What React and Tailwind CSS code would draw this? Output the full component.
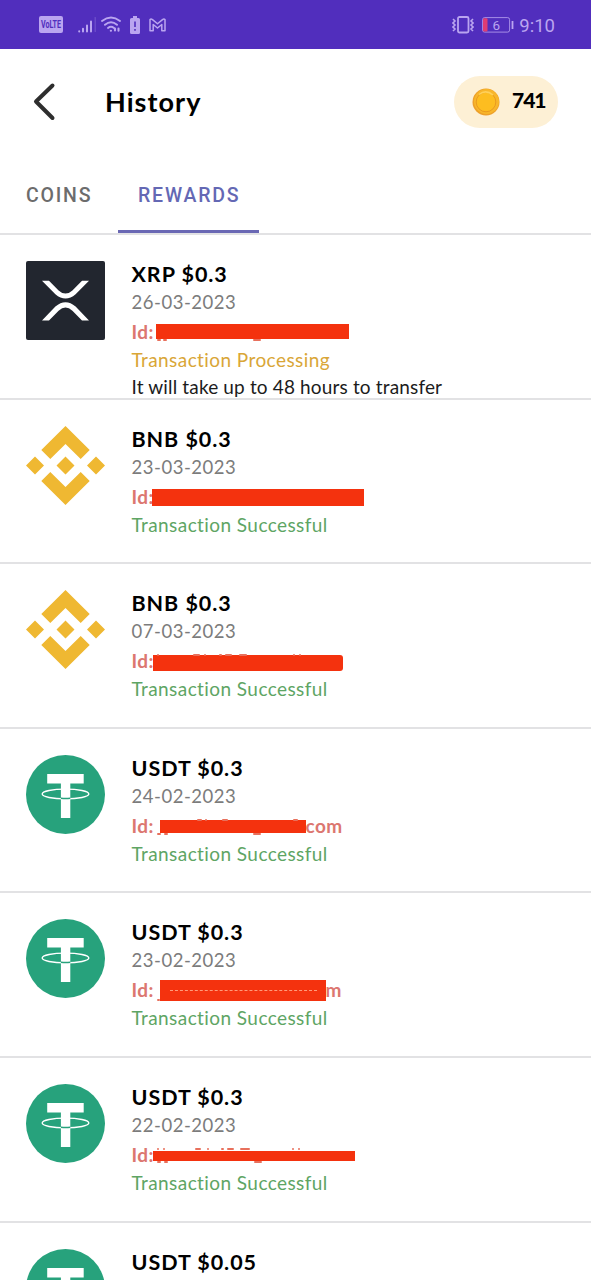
import clsx from 'clsx';

const transactions = [
    {
        coin: 'xrp',
        title: 'XRP $0.3',
        date: '26-03-2023',
        idWidth: 'w-[24.5px]',
        mask: 'w-[193px] h-[15px] mt-[6px]',
        marks: [[1, 15, 4], [7, 15, 4], [97, 15, 8]],
        status: 'processing',
        note: 'It will take up to 48 hours to transfer'
    },
    {
        coin: 'bnb',
        title: 'BNB $0.3',
        date: '23-03-2023',
        idWidth: 'w-[20.5px]',
        mask: 'w-[212px] h-[17px] mt-[6.5px]',
        status: 'success'
    },
    {
        coin: 'bnb',
        title: 'BNB $0.3',
        date: '07-03-2023',
        idWidth: 'w-[21.5px]',
        mask: 'w-[189.5px] h-[16px] mt-[8px] rounded-r-[3px]',
        marks: [[4, -1, 2], [40, -1, 7], [51, -1, 2], [66, -1, 3], [72, -1, 7], [86, -1, 8], [140, -1, 2], [146, -1, 2]],
        status: 'success'
    },
    {
        coin: 'usdt',
        title: 'USDT $0.3',
        date: '24-02-2023',
        idWidth: 'w-[28px]',
        mask: 'w-[146px] h-[13.5px] mt-[8px]',
        marks: [[-3, 13.5, 4], [4, 13.5, 4], [93, 13.5, 8], [37, -1, 5], [45, -1, 2], [62, -1, 6], [133, -1, 5]],
        tail: 'com',
        status: 'success'
    },
    {
        coin: 'usdt',
        title: 'USDT $0.3',
        date: '23-02-2023',
        idWidth: 'w-[28px]',
        mask: 'w-[166px] h-[21px] mt-[4px]',
        marks: [[-3, 19, 3]],
        dashed: true,
        tail: 'm',
        status: 'success'
    },
    {
        coin: 'usdt',
        title: 'USDT $0.3',
        date: '22-02-2023',
        idWidth: 'w-[21px]',
        mask: 'w-[202.5px] h-[10.5px] mt-[10px]',
        marks: [[4, -3, 2], [10, -3, 2], [42, -3, 6], [54, -3, 2], [68, -3, 3], [74, -3, 7], [87, -3, 10], [139, -3, 2], [145, -3, 2], [4, 10.5, 4], [11, 10.5, 4], [101, 10.5, 8]],
        status: 'success'
    },
    { coin: 'usdt', title: 'USDT $0.05' }
];

function XrpIcon() {
    return (
        <svg viewBox="0 0 79 79" className="w-full h-full">
            <rect width="79" height="79" rx="2" fill="#22262f" />
            <path d="M16 19.8h7l9.6 9.6q6.9 6.4 13.8 0L56 19.8h7L49.6 33.2q-10.1 8.6-20.2 0zM16 59.6h7l9.6-9.8q6.9-6.4 13.8 0l9.6 9.8h7L49.6 45.6q-10.1-8.6-20.2 0z" fill="#fff" />
        </svg>
    );
}

function BnbIcon() {
    return (
        <svg viewBox="0 0 79 79" className="w-full h-full" fill="#efb832">
            <path d="M39.5 0 63.7 24.1 54.7 33 39.5 17.9 24.3 33 15.3 24.1z" />
            <path d="M39.5 79 63.7 54.9 54.7 46 39.5 61.1 24.3 46 15.3 54.9z" />
            <path d="M39.5 30.5 48.5 39.5 39.5 48.5 30.5 39.5zM9 30.5 18 39.5 9 48.5 0 39.5zM70 30.5 79 39.5 70 48.5 61 39.5z" />
        </svg>
    );
}

function UsdtIcon() {
    return (
        <svg viewBox="0 0 79 79" className="w-full h-full">
            <circle cx="39.5" cy="39.5" r="39.5" fill="#27a27c" />
            <ellipse cx="39.5" cy="39" rx="23.3" ry="4.9" fill="none" stroke="#fff" strokeWidth="1.4" />
            <path d="M21.2 19h36.5v9.5H44.3V63h-9.4V28.5H21.2z" fill="#fff" />
            <path d="M34.9 43.3q4.6.5 9.4 0" fill="none" stroke="#27a27c" strokeWidth="1.5" />
        </svg>
    );
}

const icons = { xrp: XrpIcon, bnb: BnbIcon, usdt: UsdtIcon };

function StatusBar() {
    return (
        <div className="h-[49px] bg-[#512ebd] text-[#baa5f0] flex items-center justify-between pl-[39px] pr-[36px]">
            <div className="flex items-center">
                <svg width="24" height="17" viewBox="0 0 24 17">
                    <rect width="24" height="17" rx="2" fill="currentColor" />
                    <text x="12" y="12" textAnchor="middle" textLength="20" lengthAdjust="spacingAndGlyphs" fontSize="10" fontWeight="700" fontFamily="Roboto, sans-serif" fill="#512ebd">VoLTE</text>
                </svg>
                <svg width="18" height="17" viewBox="0 0 18 17" className="ml-[15px]" stroke="currentColor" strokeWidth="2" strokeLinecap="round">
                    <path d="M1.2 15.3v.2M5 12.8v2.7M9 9.5v6M13 5.5v10" />
                    <path d="M17.2 1.5v14" opacity=".3" strokeWidth="1.2" />
                </svg>
                <svg width="20" height="17" viewBox="0 0 20 17" className="ml-[5px]" fill="none" stroke="currentColor" strokeWidth="1.9" strokeLinecap="round">
                    <path d="M1 5Q10-2 19 5M4 8.8q6-5 12 0M7 12q3-2.4 6 0" />
                    <path d="M9.8 14.8h.2M14 14.5v-2M17.5 12.5v2.3" strokeWidth="2.1" />
                </svg>
                <svg width="10" height="18" viewBox="0 0 10 18" className="ml-[9px] mt-px">
                    <path d="M3 0h4v2h1.5Q10 2 10 3.5v13q0 1.5-1.5 1.5h-7Q0 18 0 16.5v-13Q0 2 1.5 2H3z" fill="currentColor" />
                    <path d="M5 5.5V11M5 13v1.8" stroke="#512ebd" strokeWidth="1.6" />
                </svg>
                <svg width="17" height="14" viewBox="0 0 17 14" className="ml-[9px]" fill="none" stroke="currentColor" strokeWidth="1.5" strokeLinejoin="round">
                    <path d="M1 12.8V1.6Q2 .6 3.5 1.6l5 4.200 5-4.200Q15 .6 16 1.600v11.200h-3.200V6.500L8.500 10 4.200 6.500v6.300z" />
                </svg>
            </div>
            <div className="flex items-center">
                <svg width="22" height="18" viewBox="0 0 22 18" fill="none" stroke="currentColor">
                    <rect x="6" y="1" width="10.5" height="15.5" rx="1.5" strokeWidth="1.8" />
                    <path d="M1 3l2 2-2 2 2 2-2 2 2 2-2 2M21 3l-2 2 2 2-2 2 2 2-2 2 2 2" strokeWidth="1.6" />
                </svg>
                <svg width="32" height="16" viewBox="0 0 32 16" className="ml-[8px]">
                    <rect x=".6" y=".6" width="27" height="14.5" rx="2" fill="none" stroke="currentColor" strokeWidth="1" opacity=".8" />
                    <rect x="1" y="1.2" width="4.5" height="13.3" rx="1" fill="#df3c74" />
                    <path d="M30.5 4v8" stroke="currentColor" strokeWidth="1.8" />
                    <text x="14.3" y="12.6" textAnchor="middle" fontSize="13.5" fontFamily="Roboto, sans-serif" fill="currentColor">6</text>
                </svg>
                <span className="ml-[5px] mt-[3px] font-[Roboto,sans-serif] text-[18.5px] leading-none">9:10</span>
            </div>
        </div>
    );
}

function Header() {
    return (
        <div className="h-[106px] flex items-center pl-[32px] pr-[33px]">
            <svg width="24" height="40" viewBox="0 0 24 40" fill="none" stroke="#2e2e2e" strokeWidth="4" strokeLinecap="round" strokeLinejoin="round">
                <path d="M20.5 3.5 4 19.5l16.5 16.5" />
            </svg>
            <h1 className="ml-[49px] -mt-px text-[27px] tracking-[1.05px] font-bold leading-none">History</h1>
            <div className="ml-auto w-[104px] h-[52px] rounded-full bg-[#fdf0d5] flex items-center pl-[18px]">
                <svg width="28" height="28" viewBox="0 0 28 28">
                    <circle cx="14" cy="14" r="13.5" fill="#eda02a" />
                    <circle cx="14.5" cy="13.5" r="12.5" fill="#f8b62b" />
                    <circle cx="14" cy="14" r="9.8" fill="#fdbd20" stroke="#e99a20" strokeWidth="1" />
                    <path d="M7 6.5Q14 1 21 7" fill="none" stroke="#ffd15a" strokeWidth="1.5" />
                </svg>
                <span className="ml-[12px] -mt-[5px] text-[21px] tracking-[-1px] font-black leading-none">741</span>
            </div>
        </div>
    );
}

function Tabs() {
    return (
        <div className="h-[80px] flex border-b-2 border-[#e2e2e4] font-[Roboto,sans-serif] text-[19.5px] font-medium tracking-[1.8px]">
            <button className="w-[118px] pl-[26px] pt-[3px] text-left text-[#6c6c6c]">COINS</button>
            <button className="w-[141px] h-[78px] pl-[20px] text-left text-[#6468b4] border-b-[3px] border-[#6a68b4] pt-[6px]">REWARDS</button>
        </div>
    );
}

// Account id with the address blocked out
function AccountId({ item }) {
    return (
        <div className="mt-[3px] h-[28px] flex items-start text-[#dc7770] text-[19px] leading-[27px] tracking-[0.4px] font-bold">
            <span className={clsx('shrink-0', item.idWidth)}>Id:</span>
            <span className={clsx('shrink-0 relative z-10 bg-[#f4320e]', item.mask)}>
                {item.marks?.map(([left, top, width]) => (
                    <i key={`${left}-${top}`} className="absolute h-[2px] rounded-full bg-[#e8705c] -z-10" style={{ left, top, width }} />
                ))}
                {item.dashed && <i className="absolute left-[10px] right-[9px] top-[10px] border-t border-dashed border-[#ff9c7c]" />}
            </span>
            {item.tail && <span>{item.tail}</span>}
        </div>
    );
}

function TransactionRow({ item }) {
    const Icon = icons[item.coin];
    return (
        <div className="h-[164.6px] shrink-0 flex pt-[26px] pl-[26px] border-b-2 border-[#e2e2e4]">
            <div className="w-[79px] h-[79px] shrink-0">
                <Icon />
            </div>
            <div className="ml-[26.5px] -mt-px whitespace-nowrap">
                <div className="h-[28px] leading-[28px] text-[21.5px] tracking-[0.95px] font-bold">{item.title}</div>
                {item.date && <div className="h-[27px] leading-[28px] text-[18.5px] tracking-[0.52px] text-[#7c7c7c]">{item.date}</div>}
                {item.mask && <AccountId item={item} />}
                {item.status && (
                    <div className={clsx('h-[27px] leading-[28px] text-[19px] tracking-[0.42px]', item.status === 'processing' ? 'text-[#d9a637]' : 'text-[#5ea564]')}>
                        {item.status === 'processing' ? 'Transaction Processing' : 'Transaction Successful'}
                    </div>
                )}
                {item.note && <div className="h-[27px] leading-[27px] text-[19px] tracking-[0.15px] text-[#1c1c1c]">{item.note}</div>}
            </div>
        </div>
    );
}

export default function App() {
    return (
        <div className="w-full h-screen overflow-hidden bg-white text-black flex flex-col font-[Lato,sans-serif]">
            <StatusBar />
            <Header />
            <Tabs />
            <div className="flex-1 min-h-0 overflow-hidden flex flex-col">
                {transactions.map((item, idx) => (
                    <TransactionRow key={idx} item={item} />
                ))}
            </div>
        </div>
    );
}
